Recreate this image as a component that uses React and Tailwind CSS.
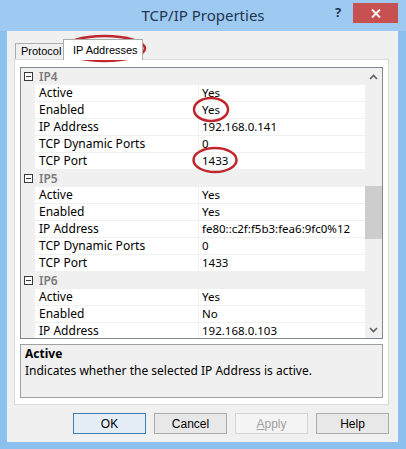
import React from 'react';

const sections = [
    {
        name: 'IP4',
        rows: [
            ['Active', 'Yes'],
            ['Enabled', 'Yes'],
            ['IP Address', '192.168.0.141'],
            ['TCP Dynamic Ports', '0'],
            ['TCP Port', '1433'],
        ],
    },
    {
        name: 'IP5',
        rows: [
            ['Active', 'Yes'],
            ['Enabled', 'Yes'],
            ['IP Address', 'fe80::c2f:f5b3:fea6:9fc0%12'],
            ['TCP Dynamic Ports', '0'],
            ['TCP Port', '1433'],
        ],
    },
    {
        name: 'IP6',
        rows: [
            ['Active', 'Yes'],
            ['Enabled', 'No'],
            ['IP Address', '192.168.0.103'],
        ],
    },
];

const segoe = { fontFamily: '"Noto Sans", "Open Sans", sans-serif' };
const arial = { fontFamily: '"Liberation Sans", Arial, sans-serif' };

const MinusBox = () => (
    <div className="w-[9px] h-[9px] border border-[#3a3a3a] bg-white flex items-center justify-center">
        <div className="w-[5px] h-px bg-[#3a3a3a]" />
    </div>
);

const Category = ({ name }) => (
    <div className="flex h-[17px] bg-[#f0f0f0]">
        <div className="w-[14px] flex items-center justify-end pr-[2px]">
            <MinusBox />
        </div>
        <div className="pl-[4px] flex items-center text-[12px] font-semibold text-[#7a7a7a]">{name}</div>
    </div>
);

const Row = ({ label, value }) => (
    <div className="flex h-[17px]">
        <div className="w-[14px] bg-[#f0f0f0] shrink-0" />
        <div className="flex flex-1 bg-white border-b border-[#f0f0f0]">
            <div className="w-[164px] pl-[4px] flex items-center text-[12px] text-black border-r border-[#f0f0f0] whitespace-nowrap">{label}</div>
            <div className="flex-1 pl-[3px] flex items-center text-[11.5px] text-black whitespace-nowrap">{value}</div>
        </div>
    </div>
);

const Chevron = ({ up }) => (
    <svg width="9" height="6" viewBox="0 0 9 6">
        <path d={up ? 'M1 5 L4.5 1.5 L8 5' : 'M1 1 L4.5 4.5 L8 1'} fill="none" stroke="#606060" strokeWidth="1.6" />
    </svg>
);

const Btn = ({ children, primary, disabled }) => (
    <button
        type="button"
        className={
            'w-[73px] h-[21px] text-[12px] flex items-center justify-center border ' +
            (primary
                ? 'border-[#3c7fb1] bg-[#e5eef7] text-black'
                : disabled
                ? 'border-[#d5d5d5] bg-[#f4f4f4] text-[#a0a0a0]'
                : 'border-[#acacac] bg-[#e8e8e8] text-black')
        }
        style={arial}
    >
        {children}
    </button>
);

export default function App() {
    return (
        <div className="relative w-[406px] h-[449px] bg-[#8cc0ee] overflow-hidden flex flex-col">
            {/* title bar */}
            <div className="h-[31px] flex items-center relative bg-[#9ecaf1]">
                <div className="flex-1 text-center text-[15px] text-[#1f3550]" style={segoe}>
                    TCP/IP Properties
                </div>
                <div className="absolute left-[335px] top-[3px] text-[13px] font-bold text-[#1f3550]" style={segoe}>?</div>
                <div className="absolute left-[353px] top-[3px] w-[45px] h-[20px] bg-[#c75050] flex items-center justify-center">
                    <svg width="10" height="9" viewBox="0 0 10 9">
                        <path d="M1 0.5 L9 8.5 M9 0.5 L1 8.5" stroke="white" strokeWidth="1.8" />
                    </svg>
                </div>
            </div>

            {/* client area */}
            <div className="ml-[7px] w-[391px] h-[411px] bg-[#f0f0f0] flex flex-col" style={segoe}>
                {/* tabs */}
                <div className="flex items-end pl-[8px] mt-[8px] h-[20px] relative z-10">
                    <div
                        className="w-[48px] h-[16px] border border-b-0 border-r-0 border-[#acacac] bg-[#f0f0f0] text-[11px] pl-[5px] flex items-center whitespace-nowrap overflow-hidden"
                        style={arial}
                    >
                        Protocol
                    </div>
                    <div
                        className="w-[80px] h-[21px] -mb-px border border-b-0 border-[#acacac] bg-white text-[11px] pl-[9px] flex items-center whitespace-nowrap"
                        style={arial}
                    >
                        IP Addresses
                    </div>
                </div>

                {/* panel */}
                <div className="ml-[7px] w-[375px] h-[346px] border border-[#d9d9d9] bg-white pt-[7px] pl-[5px] pb-[5px] flex flex-col">
                    {/* property grid */}
                    <div className="w-[363px] h-[272px] border border-[#828790] bg-[#f0f0f0] flex overflow-hidden">
                        <div className="flex-1 flex flex-col overflow-hidden">
                            {sections.map((s) => (
                                <React.Fragment key={s.name}>
                                    <Category name={s.name} />
                                    {s.rows.map(([l, v]) => (
                                        <Row key={s.name + l} label={l} value={v} />
                                    ))}
                                </React.Fragment>
                            ))}
                        </div>
                        <div className="w-[17px] bg-[#f0f0f0] flex flex-col">
                            <div className="h-[17px] flex items-center justify-center">
                                <Chevron up />
                            </div>
                            <div className="flex-1 relative">
                                <div className="absolute left-0 right-0 top-[101px] h-[53px] bg-[#cdcdcd]" />
                            </div>
                            <div className="h-[17px] flex items-center justify-center">
                                <Chevron />
                            </div>
                        </div>
                    </div>

                    {/* description */}
                    <div className="mt-[5px] w-[363px] h-[54px] border border-[#a0a0a0] bg-[#f0f0f0] pl-[4px]">
                        <div className="text-[12px] font-bold leading-[17px] text-black">Active</div>
                        <div className="text-[12px] leading-[17px] text-black">Indicates whether the selected IP Address is active.</div>
                    </div>
                </div>

                {/* buttons */}
                <div className="flex justify-end gap-[8px] pr-[9px] mt-[8px]">
                    <Btn primary>OK</Btn>
                    <Btn>Cancel</Btn>
                    <Btn disabled>
                        <span className="underline">A</span>pply
                    </Btn>
                    <Btn>Help</Btn>
                </div>
            </div>

            {/* red annotations */}
            <svg className="absolute left-0 top-0 pointer-events-none" width="406" height="449">
                <ellipse cx="104.5" cy="48.5" rx="40.5" ry="12.5" fill="none" stroke="#c0262c" strokeWidth="2.5" />
                <ellipse cx="211" cy="109.5" rx="17" ry="11.5" fill="none" stroke="#c0262c" strokeWidth="2.5" />
                <ellipse cx="215" cy="160" rx="21.5" ry="12" fill="none" stroke="#c0262c" strokeWidth="2.5" />
            </svg>
        </div>
    );
}
